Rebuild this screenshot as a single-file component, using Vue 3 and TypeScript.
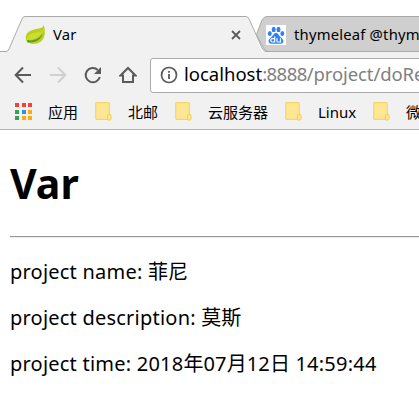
<script setup lang="ts">
interface Bookmark {
  label: string
  width: number
}

const bookmarks: Bookmark[] = [
  { label: '北邮', width: 80 },
  { label: '云服务器', width: 110 },
  { label: 'Linux', width: 88 },
  { label: '微信', width: 80 },
]

const appColors: string[] = [
  '#f44336', '#f44336', '#f44336',
  '#34a05c', '#2f8cf0', '#ffab00',
  '#34a05c', '#ffab00', '#ffab00',
]
</script>

<template>
  <div class="window">
    <header class="chrome">
      <div class="tabstrip">
        <svg class="tab-shapes" width="419" height="52" viewBox="0 0 419 52">
          <path d="M256.500 34.500 L262 20 Q264 16.500 267 16.500 H421 V51.500 H268 Q265 51.500 263.500 48 Z" fill="#cfcfcf" stroke="#a9a9a9" />
          <path d="M0 52 H262 L249 20 Q247.500 16.500 246 16.500 H25 Q23 16.500 22 19 L9 49 Q8 51.500 6 51.500 H0 Z" fill="#f1f1f1" />
          <path d="M0 51.500 H6 Q8 51.500 9 49 L22 19 Q23 16.500 25 16.500 H246 Q248 16.500 249.500 20 L262 48 Q263.500 51.500 266 51.500 H419" fill="none" stroke="#a9a9a9" />
        </svg>
        <div class="tabs">
          <div class="tab active">
            <svg class="favicon leaf" width="21" height="21" viewBox="0 0 21 21">
              <path d="M18.800 1 C17 5.500 12 4 6 6.500 C1 8.500 -.5 13 1.500 17 C4 20.500 12 21 16.500 17 C20.500 13.500 20.500 7 18.800 1Z" fill="#bccf1f" />
              <path d="M18.500 5 C16 10 10 7.500 5 10.500 C2 12 1.500 14.500 2.500 16 C10 16 16.500 12.500 18.500 5Z" fill="#cddd2c" />
              <path d="M2.500 16.500 C9 17 14.500 14.500 17.800 9.500 C16 15.500 11 19 3.500 18.300Z" fill="#5d9b31" />
              <circle cx="3.300" cy="17.300" r="1.200" fill="#5d9b31" />
            </svg>
            <span class="tab-title first">Var</span>
            <svg class="close" width="10" height="10" viewBox="0 0 10 10">
              <path d="M1 1 L9 9 M9 1 L1 9" stroke="#5a5a5a" stroke-width="1.800" />
            </svg>
          </div>
          <div class="tab second">
            <svg class="favicon" width="20" height="20" viewBox="0 0 20 20">
              <rect width="20" height="20" fill="#fff" />
              <g fill="#2f80f5">
                <ellipse cx="3.800" cy="8.400" rx="1.900" ry="2.500" />
                <ellipse cx="7.700" cy="4.400" rx="2" ry="2.700" />
                <ellipse cx="12.500" cy="4.400" rx="2" ry="2.700" />
                <ellipse cx="16.300" cy="8.400" rx="1.900" ry="2.500" />
                <path d="M10 8 C12.500 8 12.500 10.500 15 12.500 C19 15.500 17.500 19 14 18.700 H6 C2.500 19 1 15.500 5 12.500 C7.500 10.500 7.500 8 10 8Z" />
              </g>
              <path d="M8.700 11.500 V17 H6.300 Q4.800 17 4.800 15.300 Q4.800 13.700 6.300 13.700 H8.700 M11 13.300 V16 Q11 17 12 17 H14.500 V13.300" fill="none" stroke="#fff" stroke-width="1.200" />
            </svg>
            <span class="tab-title">thymeleaf @thymeleaf</span>
          </div>
        </div>
      </div>

      <div class="toolbar">
        <svg class="nav" width="104" height="20" viewBox="0 0 104 20" fill="none" stroke-width="2">
          <path d="M17 10 H2 M9 2.500 L1.700 10 L9 17.500" stroke="#5a5a5a" />
          <path d="M36 10 H51 M44 2.500 L51.300 10 L44 17.500" stroke="#d0d0d0" />
          <path d="M85.800 12 A7.200 7.200 0 1 1 83.800 4.900" stroke="#5a5a5a" />
          <path d="M87 2 V9 H80 Z" fill="#5a5a5a" />
        </svg>
        <svg class="home" width="18" height="18" viewBox="0 0 18 18">
          <path d="M1.500 9.500 L9 2 L16.500 9.500 H14 V16 H4 V9.500 Z" fill="none" stroke="#5a5a5a" stroke-width="2" />
        </svg>
        <div class="address">
          <svg class="info" width="18" height="18" viewBox="0 0 18 18">
            <circle cx="9" cy="9" r="7.500" fill="none" stroke="#5a5a5a" stroke-width="1.700" />
            <path d="M9 8 V13 M9 5 V6.800" stroke="#5a5a5a" stroke-width="1.800" />
          </svg>
          <span class="url"><span class="host">localhost</span><span class="port">:8888</span><span class="path">/project/doRe</span></span>
        </div>
      </div>

      <nav class="bookmarks">
        <div class="apps">
          <span class="dots"><i v-for="(color, i) in appColors" :key="i" :style="{ background: color }"></i></span>
          <span>应用</span>
        </div>
        <div v-for="item in bookmarks" :key="item.label" class="bookmark" :style="{ width: item.width + 'px' }">
          <svg class="folder" width="17" height="19" viewBox="0 0 17 19">
            <path d="M1.500 .7 H13 Q14.300 .7 14.300 2 V17.300 H1.500 Q.7 17.300 .7 16.500 V1.500 Q.7 .7 1.500 .7Z" fill="#ffe694" stroke="#f5d665" stroke-width="1.200" />
            <path d="M12.500 18 V13.500 Q12.500 12.500 13.500 12.500 H15 Q16 12.500 16 13.500 V17 Q16 18 15 18 Z" fill="#ffe694" stroke="#f2cf55" />
          </svg>
          <span>{{ item.label }}</span>
        </div>
      </nav>
    </header>

    <main class="page">
      <h1>Var</h1>
      <hr />
      <p>project name: <span class="cjk">菲尼</span></p>
      <p>project description: <span class="cjk">莫斯</span></p>
      <p class="time">project time: 2018<span class="cjk">年</span>07<span class="cjk">月</span>12<span class="cjk">日</span> 14:59:44</p>
    </main>
  </div>
</template>

<style>
body {
  margin: 0;
  background: #fff;
  overflow: hidden;
}
</style>

<style scoped>
.window {
  width: 419px;
  height: 417px;
  overflow: hidden;
  background: #fff;
  color: #000;
  font-family: "Noto Sans", "Noto Sans CJK SC", sans-serif;
}
.chrome {
  height: 129px;
  background: #f1f1f1;
  border-bottom: 1px solid #b3b3b3;
}
.tabstrip {
  display: grid;
  height: 52px;
  background: #fff;
  overflow: hidden;
}
.tab-shapes,
.tabs {
  grid-area: 1 / 1;
}
.tab-shapes {
  display: block;
}
.tabs {
  display: flex;
  padding-top: 17px;
}
.tab {
  display: flex;
  align-items: center;
  height: 35px;
  box-sizing: border-box;
  flex: none;
}
.active {
  width: 241px;
  padding-left: 25px;
}
.second {
  margin-left: 25px;
}
.favicon,
.close,
.nav,
.home,
.info,
.folder {
  display: block;
  flex: none;
}
.tab-title {
  margin-left: 8px;
  padding-bottom: 2px;
  font-size: 14.800px;
  letter-spacing: 0.200px;
  line-height: 20px;
  white-space: nowrap;
}
.tab-title.first {
  margin-left: 7px;
}
.close {
  margin-left: auto;
}
.toolbar {
  display: flex;
  align-items: center;
  height: 46px;
  padding-left: 14px;
}
.home {
  margin-left: 1px;
}
.address {
  display: flex;
  align-items: center;
  width: 290px;
  height: 35px;
  box-sizing: border-box;
  margin: 0 0 0 13px;
  border: 1px solid #aaa;
  border-radius: 3px;
  background: #fff;
  padding-left: 9px;
  flex: none;
}
.url {
  margin-left: 6px;
  padding-bottom: 2px;
  font-size: 18.500px;
  line-height: 26px;
  white-space: nowrap;
}
.port,
.path {
  color: #808080;
}
.port {
  letter-spacing: -0.550px;
}
.path {
  letter-spacing: -0.100px;
}
.bookmarks {
  display: flex;
  align-items: center;
  height: 27px;
  padding-left: 15px;
  font-size: 15px;
  line-height: 20px;
  white-space: nowrap;
}
.apps {
  display: flex;
  align-items: center;
  width: 80px;
  flex: none;
}
.dots {
  display: grid;
  grid-template-columns: repeat(3, 4px);
  grid-auto-rows: 4px;
  gap: 2.500px;
  margin-right: 16px;
}
.bookmark {
  display: flex;
  align-items: center;
  flex: none;
}
.folder {
  margin-right: 16px;
}
.page {
  padding: 0 0 0 10px;
}
h1 {
  margin: 27px 0 0;
  height: 53px;
  font-size: 41px;
  line-height: 53px;
  font-weight: 700;
}
hr {
  height: 1px;
  margin: 26px 0 21px;
  border: 0;
  border-top: 1px solid #999;
  background: #eee;
}
p {
  margin: 0 0 20px;
  height: 26px;
  font-size: 20px;
  letter-spacing: 0.220px;
  line-height: 26px;
  white-space: nowrap;
}
.cjk {
  letter-spacing: 0;
}
</style>
